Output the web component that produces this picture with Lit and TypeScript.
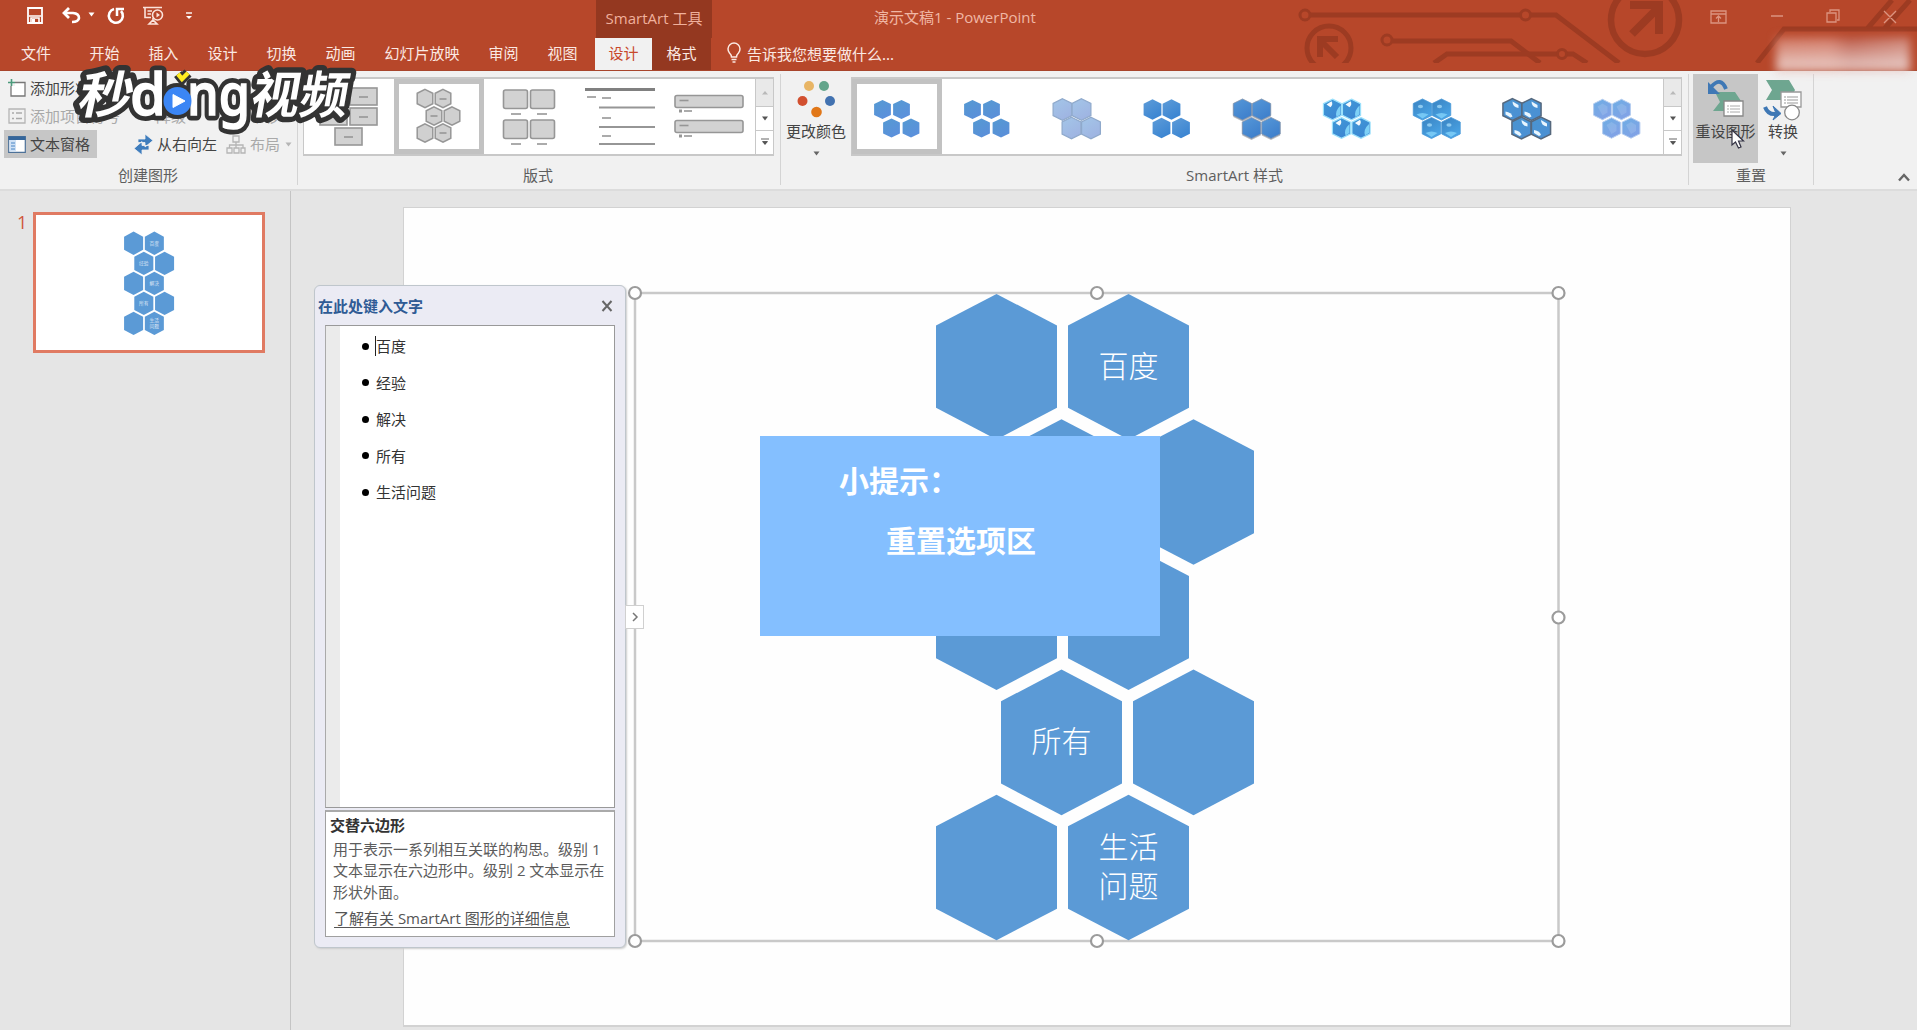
import { LitElement, html, svg, css } from "lit";
import { customElement } from "lit/decorators.js";

const hexPath = (cx: number, cy: number, hw: number, hh: number) =>
  `M${cx} ${cy - hh}L${cx + hw} ${cy - hh * 0.565}V${cy + hh * 0.565}L${cx} ${cy + hh}L${cx - hw} ${cy + hh * 0.565}V${cy - hh * 0.565}Z`;

interface Hex { x: number; y: number; lines?: string[] }

const HEXES: Hex[] = [
  { x: 996.5, y: 366.7 },
  { x: 1128.5, y: 366.7, lines: ["百度"] },
  { x: 1061.5, y: 492, lines: ["经验"] },
  { x: 1193.5, y: 492 },
  { x: 996.5, y: 617.2 },
  { x: 1128.5, y: 617.2, lines: ["解决"] },
  { x: 1061.5, y: 742.4, lines: ["所有"] },
  { x: 1193.5, y: 742.4 },
  { x: 996.5, y: 867.5 },
  { x: 1128.5, y: 867.5, lines: ["生活", "问题"] },
];

const hexDiagram = () => HEXES.map((h) => svg`
  <path d=${hexPath(h.x, h.y, 60.5, 72.8)} fill="#5b9ad6"></path>
  ${(h.lines ?? []).map((t, i, a) => svg`<text class="hex-text" text-anchor="middle"
    x=${h.x} y=${h.y + 10 + (i - (a.length - 1) / 2) * 39}>${t}</text>`)}`);

const CLUSTER = [[-14.5, -8.5], [4.5, -8.5], [-5.5, 10], [14, 10]];

interface StyleLook { top: string; bottom: string; line?: string; lw?: number; size?: number; shadow?: boolean; shine?: string; opacity?: number }

const STYLES: StyleLook[] = [
  { top: "#559ad2", bottom: "#5b90dc" },
  { top: "#559ad2", bottom: "#5a8fd9" },
  { top: "#a3c6e8", bottom: "#9fb4e2", line: "#8fa9cb", lw: 1.2, size: 1.12 },
  { top: "#5e9cd8", bottom: "#3b85d2", size: 1.06 },
  { top: "#5698d8", bottom: "#3f80cc", line: "#8494ab", lw: 0.8, size: 1.1, shadow: true },
  { top: "#3f9ad8", bottom: "#3d86d2", line: "#9be0fb", lw: 1.2, size: 1.08, shine: "corner" },
  { top: "#3a82c0", bottom: "#49a4e6", line: "#4798d8", lw: 0.8, size: 1.1, shine: "glow" },
  { top: "#4a94d0", bottom: "#4a90d4", line: "#56687d", lw: 1.5, size: 1.14, shine: "both" },
  { top: "#6eaee4", bottom: "#82a2e6", line: "#b4cdf0", lw: 1, size: 1.06, shine: "facet" },
];

const cluster = (s: StyleLook, n: number) => html`
  <svg class="cluster" width="56" height="60" viewBox="-28 -30 56 60">
    <defs><linearGradient id="g${n}" x1="0" y1="0" x2="0.6" y2="1">
      <stop offset="0" stop-color=${s.top}></stop><stop offset="1" stop-color=${s.bottom}></stop>
    </linearGradient></defs>
    ${CLUSTER.map(([x, y]) => {
      const k = s.size ?? 1;
      return svg`
        ${s.shadow ? svg`<path d=${hexPath(x, y + 1.6, 9.2, 10.4)} fill="#8b8f98" opacity=".6"></path>` : ""}
        <path d=${hexPath(x, y, 8.4 * k, 9.6 * k)} fill="url(#g${n})" stroke=${s.line ?? "none"} stroke-width=${s.lw ?? 0}></path>
        ${s.shine === "corner" ? svg`
          <path d="M${x - 6} ${y - 5}l5-3.2q2 3-1 6z" fill="#fff" opacity=".95"></path>
          <path d="M${x + 8} ${y - 4}v9l-4 2.5q-2-6 4-11.500z" fill="#8fe2ff" opacity=".8"></path>` : ""}
        ${s.shine === "glow" ? svg`
          <ellipse cx=${x - 2} cy=${y - 3} rx="2.6" ry="1.8" fill="#a5dcfa" opacity=".75"></ellipse>
          <path d="M${x - 6} ${y + 5}q6-3 12 0l-6 4z" fill="#82d2fa" opacity=".8"></path>` : ""}
        ${s.shine === "both" ? svg`
          <path d="M${x} ${y - 8}l6 3.500v3q-6-1-6-6.500z" fill="#e9f6ff"></path>
          <path d="M${x - 7} ${y + 2}q6 1 7 5l-2 1-5-3z" fill="#e9f6ff"></path>` : ""}
        ${s.shine === "facet" ? svg`
          <path d="M${x - 5} ${y - 3}L${x} ${y - 6}l5 3v6l-5 3z" fill="#fff" opacity=".13"></path>` : ""}`;
    })}
  </svg>`;

const box = (x: number, y: number, w: number, h: number, r = 0) =>
  svg`<rect x=${x} y=${y} width=${w} height=${h} rx=${r} fill="#d2d2d2" stroke="#969696" stroke-width="1.6"></rect>`;
const dash = (x: number, y: number, w: number, t = 1.6, c = "#969696") =>
  svg`<path d="M${x} ${y}h${w}" stroke=${c} stroke-width=${t}></path>`;

// Each layout preview is drawn in a 90 x 76 cell.
const LAYOUTS = [
  svg`${box(16, 9, 27, 17)}${box(46, 9, 27, 17)}${box(16, 29, 27, 17)}${box(46, 29, 27, 17)}${box(31, 49, 27, 17)}
      ${dash(25, 18, 9)}${dash(55, 18, 9)}${dash(25, 38, 9)}${dash(55, 38, 9)}${dash(40, 58, 9)}`,
  svg`${[[31, 19.5], [49, 19.5], [40, 37], [58, 37], [31, 54], [49, 54]].map(([x, y]) =>
      svg`<path d=${hexPath(x, y, 7.8, 9.2)} fill="#d0d0d0" stroke="#969696" stroke-width="1.5"></path>`)}
      ${dash(45.5, 20, 7)}${dash(36.5, 37, 7)}${dash(45.5, 54, 7)}`,
  svg`${box(19.500, 11, 24, 18.500, 2)}${box(46.500, 11, 24, 18.500, 2)}${box(19.500, 41, 24, 18.500, 2)}${box(46.500, 41, 24, 18.500, 2)}
      ${dash(27, 35, 10)}${dash(53, 35, 10)}${dash(27, 65, 10)}${dash(53, 65, 10)}`,
  svg`${dash(11, 10.500, 70, 3, "#808080")}${dash(13, 18, 9)}${dash(28, 19, 9)}${dash(25, 28.500, 56, 2)}${dash(28, 39, 9)}
      ${dash(25, 48, 56, 2)}${dash(28, 57, 9)}${dash(25, 65, 56, 2)}`,
  svg`${box(11, 16.500, 68, 12, 2)}${box(11, 41.500, 68, 12, 2)}${dash(15.500, 21.500, 9)}${dash(15.500, 46.500, 9)}
      ${dash(15, 32, 3, 3)}${dash(20, 32, 8)}${dash(15, 57, 3, 3)}${dash(20, 57, 8)}`,
];

const scroller = html`
  <div class="scroller">
    <div class="sc off"><svg width="8" height="5"><path d="M1 4.500L4 1L7 4.500Z" fill="#b9b9b9"></path></svg></div>
    <div class="sc"><svg width="8" height="5"><path d="M1 .5L4 4.500L7 .5Z" fill="#555"></path></svg></div>
    <div class="sc"><svg width="8" height="8"><path d="M0 1H8M1.500 3.500H6.500" stroke="#666" stroke-width="1.200"></path><path d="M1 3.500L4 7L7 3.500Z" fill="#555"></path></svg></div>
  </div>`;

const caret = (c: string) => html`<svg width="7" height="5"><path d="M.5 .5h6L3.500 4.500z" fill=${c}></path></svg>`;

const css1 = css`
  :host { display: block; width: 1917px; height: 1030px; overflow: hidden; position: relative; background: #e5e5e5;
    font-family: "Noto Sans", "Noto Sans CJK SC", sans-serif; font-size: 15px; line-height: 20px; color: #444; white-space: nowrap; }
  * { box-sizing: border-box; }
  svg { display: block; flex: none; overflow: visible; }
  .header { position: relative; height: 71px; background: #b7472a; border-bottom: 1px solid #a8452c; display: flex; flex-direction: column; color: #fbe9e3; }
  .art { position: absolute; left: 1290px; top: 0; }
  .titlebar { position: relative; display: flex; height: 39px; }
  .quick { width: 596px; display: flex; align-items: center; padding: 0 0 7px 27px; }
  .quick .undo { margin-left: 18px; } .quick .dd { margin-left: 7px; margin-top: -2px; }
  .quick .redo { margin-left: 12px; } .quick .show { margin-left: 18px; } .quick .more { margin-left: 23px; }
  .ctx { width: 116px; background: #943820; color: #f0b09c; display: flex; justify-content: center; padding-top: 8px; font-family: "Open Sans", "Noto Sans CJK SC", sans-serif; }
  .doc { margin-left: 162px; padding-top: 7px; color: #f0b7a5; font-family: "Open Sans", "Noto Sans CJK SC", sans-serif; width: 168px; }
  .win { margin-left: auto; display: flex; align-items: center; padding: 0 19px 7px 0; }
  .tabs { position: relative; display: flex; height: 32px; }
  .tab { width: 59px; display: flex; justify-content: center; padding-top: 5px; }
  .tab.file { width: 75px; padding-right: 3px; }
  .tab.wide { width: 104px; }
  .tab.active { width: 57px; margin-left: 3px; background: #f1f1f1; color: #c8492c; }
  .tab.fmt { background: #943820; }
  .tell { display: flex; margin-left: 16px; gap: 6px; padding-top: 6px; }
  .smudge { position: absolute; left: 1776px; top: 37px; width: 134px; height: 35px; filter: blur(5px);
    background: linear-gradient(180deg, transparent, rgba(238,222,220,.7) 75%), linear-gradient(90deg, rgba(217,130,110,.7), rgba(216,130,112,.8) 40%, rgba(190,100,88,.6) 55%, rgba(214,150,140,.7)); }
  .ribbon { height: 120px; background: #f1f1f1; border-bottom: 2px solid #dcdcdc; display: flex; padding-top: 3px; }
  .group { display: flex; flex-direction: column; height: 111px; border-right: 1px solid #d4d4d4; }
  .body { height: 93px; display: flex; }
  .caption { height: 20px; text-align: center; color: #5e5e5e; font-family: "Open Sans", "Noto Sans CJK SC", sans-serif; }
  .g1 { width: 298px; } .g2 { width: 483px; } .g3 { width: 908px; } .g4 { width: 125px; }
  .g1 .caption { padding-right: 1px; }
  .cmds { display: grid; grid-template-columns: 126px 92px 76px; grid-template-rows: 28px 28px 28px; padding-left: 4px; }
  .cmd { display: flex; align-items: center; gap: 4px; padding-left: 4px; }
  .cmd.dim { color: #a9a9a9; }
  .cmd.on { background: #c6c6c6; width: 93px; }
  .cmd .dd { margin-left: 1px; }
  .gal { display: flex; height: 79px; margin-top: 3px; background: #fff; border: 1px solid #c8c8c8; border-width: 2px 1px; }
  .g2 .gal { margin-left: 5px; width: 471px; }
  .g3 .gal { width: 831px; }
  .cell { width: 90px; height: 75px; display: flex; align-items: center; justify-content: center; }
  .cell.sel { border: 5px solid #c2c2c2; }
  .cluster { margin-top: 3px; }
  .scroller { margin-left: auto; width: 18px; border-left: 1px solid #c8c8c8; display: flex; flex-direction: column; }
  .sc { flex: 1; display: flex; align-items: center; justify-content: center; border-bottom: 1px solid #c8c8c8; }
  .sc:last-child { border: 0; } .sc.off { background: #e9e9e9; flex: 1.15; }
  .big { display: flex; flex-direction: column; align-items: center; height: 89px; padding-top: 4px; }
  .big svg.pic { height: 42px; } .big .lbl { height: 31px; padding-top: 1px; }
  .colors { width: 70px; }
  .reset { width: 65px; margin-left: 4px; background: #c6c6c6; } .convert { width: 50px; }
  .collapse { margin: 99px 0 0 84px; }
  .work { display: flex; height: 839px; }
  .side { width: 291px; border-right: 1px solid #c4c4c4; display: flex; padding: 21px 0 0 17px; }
  .num { width: 16px; color: #d0573c; font-size: 18px; line-height: 20px; font-family: "Open Sans", sans-serif; }
  .thumb { width: 232px; height: 141px; background: #fff; border: 3px solid #e07a62; }
  .hex-text { font-family: "Noto Sans CJK SC", sans-serif; font-size: 30px; font-weight: 300; fill: #fff; }
  .stage { padding: 16px 0 0 112px; }
  .slide { width: 1388px; height: 820px; background: #fefefe; border: 1px solid #d2d2d2; border-bottom-width: 2px; }
  .canvas { position: absolute; left: 0; top: 0; pointer-events: none; }
  .pane { position: absolute; left: 314px; top: 285px; width: 312px; height: 663px; background: #ebebf4; border: 1px solid #bfc6cc; border-radius: 6px; display: flex; flex-direction: column; padding: 0 10px; box-shadow: 1px 1px 2px #ccc; }
  .phead { height: 39px; display: flex; justify-content: space-between; align-items: center; margin: 0 2px 0 -7px; color: #2f5b95; font-weight: 700; }
  .list { height: 483px; background: #fff; border: 1px solid #999; border-left-color: #aaa; color: #333; display: flex; }
  .gutter { width: 14px; background: #ebebeb; }
  .items { padding-top: 2px; }
  .item { height: 36.500px; display: flex; align-items: center; padding-left: 22px; gap: 7px; }
  .dot { width: 7px; height: 7px; border-radius: 50%; background: #000; }
  .cur { border-left: 1px solid #222; margin-left: -1px; }
  .info { margin-top: 2px; height: 127px; background: #fff; border: 1px solid #a0a0a0; border-top: 2px solid #aaa; padding: 3px 4px; }
  .info b { display: block; color: #333; }
  .info p { margin: 4px 0 0 3px; line-height: 21.300px; color: #5c5c5c; font-family: "Open Sans", "Noto Sans CJK SC", sans-serif; }
  .info a { display: inline-block; margin: 6px 0 0 4px; line-height: 18px; border-bottom: 1px solid #555; height: 19px; color: #555; font-family: "Open Sans", "Noto Sans CJK SC", sans-serif; }
  .toggle { position: absolute; left: 625px; top: 605px; width: 19px; height: 24px; background: #fff; border: 1px solid #d0d0d0; display: flex; align-items: center; justify-content: center; }
  .tip { position: absolute; left: 760px; top: 436px; width: 400px; height: 200px; background: #84bfff; color: #fff; font-size: 30px; line-height: 60px; font-weight: 700; padding: 13px 0 0 79px; font-family: "Noto Sans CJK SC", sans-serif; }
  .tip div + div { padding-left: 47px; }
  .logo { position: absolute; left: 66px; top: 60px; }
  .logo text { fill: #fff; font-family: "Noto Sans CJK SC", sans-serif; font-weight: 700; }
  .logo .lat { font-family: "Noto Sans", sans-serif; font-weight: 500; stroke: #fff; stroke-width: 1.500px; }
  .logo .back text { stroke: #333; fill: #333; stroke-width: 11px; stroke-linejoin: round; }
  .cursor { position: absolute; left: 1731px; top: 129px; }
`;

const logoText = svg`
  <g transform="translate(10 53) skewX(-12)"><text font-size="50" x="0" y="0" textLength="54" lengthAdjust="spacingAndGlyphs">秒</text></g>
  <text class="lat" font-size="58" x="64" y="54.500">d</text>
  <text class="lat" font-size="58" x="121" y="54.500" textLength="63" lengthAdjust="spacingAndGlyphs">ng</text>
  <g transform="translate(184 53) skewX(-10)"><text font-size="50" x="-1" y="0" textLength="97" lengthAdjust="spacingAndGlyphs">视频</text></g>`;

@customElement("app-root")
export class AppRoot extends LitElement {
  static styles = css1;

  private header() {
    return html`
    <div class="header">
      <svg class="art" width="627" height="63" viewBox="1290 0 627 63" fill="none" stroke="#9d3b22" stroke-width="5" style="overflow:hidden">
        <circle cx="1305" cy="15" r="5" stroke-width="3"></circle><path d="M1310 15H1520"></path>
        <circle cx="1525.500" cy="15" r="5" stroke-width="3"></circle><path d="M1531 15H1556L1619 63"></path>
        <circle cx="1329" cy="48" r="22"></circle><path d="M1337 57L1322 42M1320 57V39H1338" stroke-width="6"></path>
        <circle cx="1387" cy="40" r="5" stroke-width="3"></circle><path d="M1392 41H1511L1540 63"></path>
        <path d="M1434 63L1447 54H1557M1567 54H1573L1587 63"></path><circle cx="1562" cy="54" r="4.500" stroke-width="3"></circle>
        <circle cx="1645" cy="20" r="34" stroke-width="6.500"></circle><path d="M1632 34L1658 8M1630 5H1659V34" stroke-width="8"></path>
        <path d="M1757 63L1784 29H1917M1867 29L1892 0M1885 28L1910 0"></path>
      </svg>
      <div class="titlebar">
        <div class="quick">
          <svg width="16" height="17" viewBox="0 0 16 17"><path d="M1 1H15V16H1Z" fill="none" stroke="#fff" stroke-width="1.800"></path><path d="M2 9H14M4 16V11H12V16" fill="none" stroke="#fff" stroke-width="1.600"></path><path d="M5 12h3v4h-3z" fill="#fff"></path></svg>
          <svg class="undo" width="20" height="17" viewBox="0 0 20 17"><path d="M4 6H12Q18 6.500 18 11Q17.500 15 11 15" fill="none" stroke="#fff" stroke-width="2.600"></path><path d="M8 1L3 6L8 11" fill="none" stroke="#fff" stroke-width="2.800"></path></svg>
          <span class="dd">${caret("#fff")}</span>
          <svg class="redo" width="18" height="17" viewBox="0 0 18 17"><path d="M7 2A7 7 0 1 0 14 4" fill="none" stroke="#fff" stroke-width="2.600"></path><path d="M10 9V2H17" fill="none" stroke="#fff" stroke-width="2.500"></path></svg>
          <svg class="show" width="20" height="19" viewBox="0 0 20 19" fill="none" stroke="#fbe3db" stroke-width="1.600"><path d="M0 1.500H19M2 2V11.500H8M4.500 5H9M4.500 8H8M10 12V15M6 18L10 14L14 18Z"></path><circle cx="14.500" cy="9" r="5"></circle><path d="M13.500 6.500L17 9L13.500 11.500Z" fill="#fbe3db" stroke="none"></path></svg>
          <svg class="more" width="6" height="8"><path d="M0 1H6" stroke="#fff" stroke-width="1.400"></path><path d="M0 4H6L3 7Z" fill="#fff"></path></svg>
        </div>
        <div class="ctx">SmartArt 工具</div>
        <div class="doc">演示文稿1 - PowerPoint</div>
        <div class="win">
          <svg width="193" height="16" viewBox="0 0 193 16" fill="none" stroke="#dc9480" stroke-width="1.300">
            <path d="M6 3H21V15H6ZM6 6H21M13.500 14V8M11 10.500L13.500 8L16 10.500M66 8H78M122 5H131V14H122ZM125 4V2H134V12H132M179 3L191 15M191 3L179 15"></path></svg>
        </div>
      </div>
      <div class="tabs">
        <div class="tab file">文件</div><div class="tab">开始</div><div class="tab">插入</div><div class="tab">设计</div><div class="tab">切换</div><div class="tab">动画</div>
        <div class="tab wide">幻灯片放映</div><div class="tab">审阅</div><div class="tab">视图</div>
        <div class="tab active">设计</div><div class="tab fmt">格式</div>
        <div class="tell"><svg width="14" height="20" viewBox="0 0 14 20" fill="none" stroke="#fbe9e3" stroke-width="1.500"><path d="M4.500 13Q4.500 11 2.500 9A6 6 0 1 1 11.500 9Q9.500 11 9.500 13ZM4.500 15.500H9.500M5.500 18H8.500"></path></svg>告诉我您想要做什么...</div>
      </div>
      <div class="smudge"></div>
    </div>`;
  }

  private ribbon() {
    return html`
    <div class="ribbon">
      <div class="group g1">
        <div class="body"><div class="cmds">
          <div class="cmd"><svg width="18" height="18" viewBox="0 0 18 18"><path d="M3 3.500H17V17H3Z" fill="#fff" stroke="#777" stroke-width="1.300"></path><path d="M0 0H7V7H0Z" fill="#f1f1f1"></path><path d="M3.500 0V7M0 3.500H7" stroke="#4c9a7c" stroke-width="1.600"></path></svg>添加形状</div>
          <div class="cmd">升级</div>
          <div class="cmd"><svg width="20" height="18" viewBox="0 0 20 18"><path d="M9 16V3M4 8L9 3L14 8" fill="none" stroke="#999" stroke-width="2"></path></svg>上移</div>
          <div class="cmd dim"><svg width="18" height="16" viewBox="0 0 18 16"><path d="M1 1H17V15H1Z" fill="none" stroke="#b5b5b5" stroke-width="1.300"></path><path d="M4 5H6M8 5H14M4 10.500H6M8 10.500H14" stroke="#aaa" stroke-width="1.500"></path></svg>添加项目符号</div>
          <div class="cmd dim"><svg width="18" height="14"></svg>降级</div>
          <div class="cmd dim"><svg width="20" height="14"></svg>下移</div>
          <div class="cmd on"><svg width="18" height="17" viewBox="0 0 18 17"><path d="M.7.7H17.300V16.300H.7Z" fill="#fff" stroke="#4d7198" stroke-width="1.200"></path><path d="M.5.5H17.500V4H.5Z" fill="#35669b"></path><path d="M1.500 4H8V15.500H1.500Z" fill="#cfe1f5"></path><path d="M3 7H7M3 10H7M3 13H7" stroke="#4b86c4"></path></svg>文本窗格</div>
          <div class="cmd"><svg width="19" height="22" viewBox="0 0 19 22"><path d="M4 6H11V1L19 7.500L11 14V9.500H4ZM15 12.500H8V8.500L0 15.500L8 22V17H15Z" fill="#3f7dbd" stroke="#f1f1f1" stroke-width=".8"></path></svg>从右向左</div>
          <div class="cmd dim"><svg width="20" height="19" viewBox="0 0 20 19" fill="none" stroke="#b5b5b5" stroke-width="1.300"><path d="M7 1H13V7H7ZM1 13H6V18H1ZM8 13H13V18H8ZM15 13H19V18H15ZM10 7V13M3.500 13V10H17V13"></path></svg>布局<span class="dd">${caret("#b5b5b5")}</span></div>
        </div></div>
        <div class="caption">创建图形</div>
      </div>
      <div class="group g2">
        <div class="body"><div class="gal">
          ${LAYOUTS.map((l, i) => html`<div class="cell ${i === 1 ? "sel" : ""}"><svg width="90" height="76" viewBox="0 0 90 76" style=${i === 1 ? "margin:0 -5px" : ""}>${l}</svg></div>`)}
          ${scroller}
        </div></div>
        <div class="caption" style="padding-right:2px">版式</div>
      </div>
      <div class="group g3">
        <div class="body">
          <div class="big colors">
            <svg class="pic" width="38" height="38" viewBox="0 0 38 38"><circle cx="12" cy="6" r="5" fill="#e8b565"></circle><circle cx="27" cy="6" r="5" fill="#63a58b"></circle><circle cx="5.500" cy="21" r="5" fill="#d2502f"></circle><circle cx="33" cy="21" r="5" fill="#4272b0"></circle><circle cx="19.500" cy="32" r="5.300" fill="#e17718"></circle></svg>
            <div class="lbl">更改颜色</div>${caret("#666")}
          </div>
          <div class="gal">
            ${STYLES.map((s, i) => html`<div class="cell ${i === 0 ? "sel" : ""}">${cluster(s, i)}</div>`)}
            ${scroller}
          </div>
        </div>
        <div class="caption">SmartArt 样式</div>
      </div>
      <div class="group g4">
        <div class="body">
          <div class="big reset">
            <svg class="pic" width="38" height="40" viewBox="0 0 38 40"><path d="M8 13H28L36 25V32H6L13 23Z" fill="#6ea690"></path><path d="M4 8Q14-3 19 10" fill="none" stroke="#3f78b5" stroke-width="3.800"></path><path d="M1 3V15H13Z" fill="#3f78b5"></path><path d="M17 22H36V37H17Z" fill="#fff" stroke="#888" stroke-width="1.300"></path><path d="M20 27H33M20 30H33M20 33H33" stroke="#aaa" stroke-dasharray="2 1 10"></path></svg>
            <div class="lbl">重设图形</div>
          </div>
          <div class="big convert">
            <svg class="pic" width="38" height="40" viewBox="0 0 38 40"><path d="M2 1H25L31 11L26 21H2L8 11Z" fill="#6ea690"></path><path d="M17 13H37V28H17Z" fill="#fff" stroke="#999" stroke-width="1.300"></path><path d="M20 18H34M20 21H34M20 24H34" stroke="#999" stroke-dasharray="2 1 11"></path><circle cx="28" cy="33.500" r="7.300" fill="#fff" stroke="#888" stroke-width="1.300"></circle><path d="M1 28Q4 36 12 35" fill="none" stroke="#3f78b5" stroke-width="4"></path><path d="M9 27L17 34.500L9 41L12 34.500Z" fill="#3f78b5" stroke="#3f78b5"></path></svg>
            <div class="lbl">转换</div>${caret("#666")}
          </div>
        </div>
        <div class="caption">重置</div>
      </div>
      <svg class="collapse" width="12" height="9" viewBox="0 0 12 9"><path d="M1 7.500L6 2L11 7.500" fill="none" stroke="#666" stroke-width="2.400"></path></svg>
    </div>`;
  }

  private pane() {
    return html`
    <div class="pane">
      <div class="phead">在此处键入文字<svg width="12" height="12" viewBox="0 0 12 12"><path d="M1.500 1L10.500 11M10.500 1L1.500 11" stroke="#666" stroke-width="2"></path></svg></div>
      <div class="list"><div class="gutter"></div><div class="items">
        ${["百度", "经验", "解决", "所有", "生活问题"].map((t, i) => html`<div class="item"><span class="dot"></span><span class=${i ? "" : "cur"}>${t}</span></div>`)}
      </div></div>
      <div class="info">
        <b>交替六边形</b>
        <p>用于表示一系列相互关联的构思。级别 1<br>文本显示在六边形中。级别 2 文本显示在<br>形状外面。</p>
        <a>了解有关 SmartArt 图形的详细信息</a>
      </div>
    </div>
    <div class="toggle"><svg width="6" height="10" viewBox="0 0 6 10"><path d="M1 1L5 5L1 9" fill="none" stroke="#777" stroke-width="1.500"></path></svg></div>`;
  }

  render() {
    return html`
      ${this.header()}
      ${this.ribbon()}
      <div class="work">
        <div class="side">
          <div class="num">1</div>
          <div class="thumb"><svg width="226" height="135" viewBox="376 190 1437 844" preserveAspectRatio="none">${hexDiagram()}</svg></div>
        </div>
        <div class="stage"><div class="slide"></div></div>
      </div>
      <svg class="canvas" width="1917" height="1030">
        <path d="M635 293H1558.500V941H635Z" fill="none" stroke="#c9c9c9" stroke-width="2.500"></path>
        ${hexDiagram()}
        ${[[635, 293], [1097, 293], [1558.500, 293], [1558.500, 617.500], [635, 941], [1097, 941], [1558.500, 941]].map(([x, y]) =>
          svg`<circle cx=${x} cy=${y} r="6" fill="#fff" stroke="#9b9b9b" stroke-width="2.200"></circle>`)}
      </svg>
      ${this.pane()}
      <div class="tip"><div>小提示：</div><div>重置选项区</div></div>
      <svg class="logo" width="300" height="80" viewBox="0 0 300 80">
        <g class="back">${logoText}<circle cx="111" cy="41" r="18" fill="#333"></circle><path d="M112 14L116 19L122 13" fill="none" stroke="#333" stroke-width="10"></path></g>
        <g>${logoText}</g>
        <circle cx="111.500" cy="41" r="14" fill="#3b86f5"></circle><path d="M107 34.500L119 41L107 47.500Z" fill="#fff" stroke="#fff" stroke-linejoin="round"></path>
        <path d="M112 14L116 19L122 13" fill="none" stroke="#ffed21" stroke-width="4.500"></path>
      </svg>
      <svg class="cursor" width="14" height="20" viewBox="0 0 14 20"><path d="M1 1V16L4.500 13L7.500 19L10 18L7.500 12H12.500Z" fill="#fff" stroke="#334" stroke-width="1.200"></path></svg>`;
  }
}
